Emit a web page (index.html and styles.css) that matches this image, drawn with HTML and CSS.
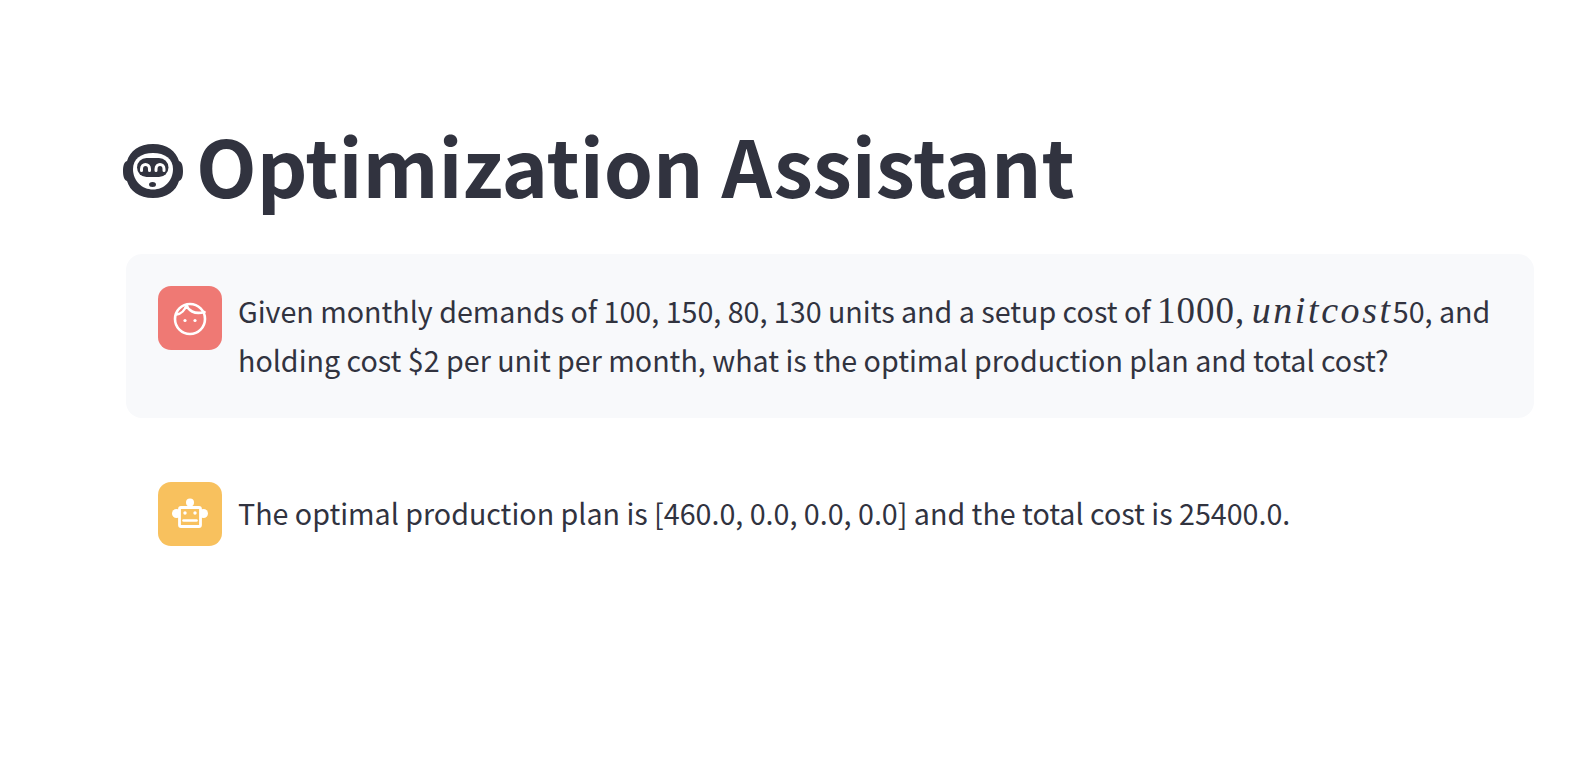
FILE: index.html
```html
<!DOCTYPE html>
<html lang="en">
<head>
<meta charset="utf-8">
<title>Optimization Assistant</title>
<link rel="stylesheet" href="styles.css">
</head>
<body>
<main class="main">
  <h1 class="title">
    <svg class="title-icon" viewBox="0 0 60 54" aria-hidden="true">
      <path class="ink" d="M30 0C44 0 53 7 56 17C59 18 60 22 60 27C60 32 59 36 56 37C53 47 44 54 30 54C16 54 7 47 4 37C1 36 0 32 0 27C0 22 1 18 4 17C7 7 16 0 30 0Z"/>
      <path class="paper" d="M30 9C42 9 50 15 50 25C50 37 41 45.500 30 45.500C19 45.500 10 37 10 25C10 15 18 9 30 9Z"/>
      <rect class="ink" x="14" y="14" width="31.500" height="19" rx="9.500"/>
      <path class="smile" d="M18.500 26.500V25C18.500 19 26.500 19 26.500 25V26.500M33 26.500V25C33 19 41 19 41 25V26.500"/>
      <ellipse class="ink" cx="29.500" cy="40.500" rx="3.500" ry="2.500"/>
    </svg>
    <span class="title-text">Optimization Assistant</span>
  </h1>
  <section class="msg msg-user">
    <div class="avatar avatar-user">
      <svg viewBox="0 0 36 36" class="avatar-icon" aria-hidden="true">
        <circle class="line" cx="18" cy="19" r="15"/>
        <path class="line" d="M4.500 14.500C9 14 13 10 14.500 5C16 10 22 15 32.500 12"/>
        <circle class="dot" cx="13" cy="20.500" r="1.600"/>
        <circle class="dot" cx="23" cy="20.500" r="1.600"/>
      </svg>
    </div>
    <p class="text">Given monthly demands of 100, 150, 80, 130 units and a setup cost of <span class="math">1000,</span> <span class="math math-i">unitcost</span>50, and holding cost $2 per unit per month, what is the optimal production plan and total cost?</p>
  </section>
  <section class="msg">
    <div class="avatar avatar-bot">
      <svg viewBox="0 0 36 36" class="avatar-icon" aria-hidden="true">
        <circle class="dot" cx="18" cy="6.500" r="4"/>
        <circle class="dot" cx="4.500" cy="17.500" r="4.500"/>
        <circle class="dot" cx="31.500" cy="17.500" r="4.500"/>
        <rect class="bot-head" x="7.500" y="11.500" width="21" height="19" rx="1.500"/>
        <circle class="dot" cx="13" cy="17" r="1.700"/>
        <circle class="dot" cx="23" cy="17" r="1.700"/>
        <path class="line" d="M11.500 24.500H24.500"/>
      </svg>
    </div>
    <p class="text text-single">The optimal production plan is [460.0, 0.0, 0.0, 0.0] and the total cost is 25400.0.</p>
  </section>
</main>
</body>
</html>
```
FILE: styles.css
```css
* { box-sizing: border-box; }
html, body { margin: 0; padding: 0; background: #fff; }
body { font-family: "Noto Sans CJK SC", "Noto Sans", sans-serif; color: #31333f; height: 770px; overflow: hidden; }
.main { padding: 121px 42px 0 126px; display: flex; flex-direction: column; }
.title { margin: 0 0 33px -3px; height: 100px; display: flex; align-items: center; gap: 13px; font-size: 78.900px; line-height: 86px; font-weight: 700; white-space: nowrap; }
.title-text { padding-bottom: 14px; }
.title-icon { width: 60px; height: 54px; flex: none; }
.ink { fill: #31333f; }
.paper { fill: #fff; }
.smile { fill: none; stroke: #fff; stroke-width: 3; stroke-linecap: round; }
.msg { display: flex; align-items: flex-start; gap: 16px; padding: 32px; border-radius: 16px; margin-bottom: 32px; }
.msg-user { background: #f8f9fb; }
.avatar { width: 64px; height: 64px; border-radius: 13px; flex: none; display: flex; align-items: center; justify-content: center; }
.avatar-user { background: #ef7974; }
.avatar-bot { background: #f8c15e; }
.avatar-icon { width: 36px; height: 36px; }
.line { fill: none; stroke: #fff; stroke-width: 2.600; stroke-linecap: round; stroke-linejoin: round; }
.dot { fill: #fff; }
.bot-head { fill: #f8c15e; stroke: #fff; stroke-width: 2.800; }
.text { margin: 0; padding-bottom: 1px; font-size: 28.650px; line-height: 49.300px; color: #31333f; }
.text-single { align-self: center; padding-bottom: 2px; }
.math { font-family: "Liberation Serif", "DejaVu Serif", serif; font-size: 37px; line-height: 1; letter-spacing: 1px; }
.math-i { font-style: italic; font-size: 38px; letter-spacing: 2.600px; }
```
